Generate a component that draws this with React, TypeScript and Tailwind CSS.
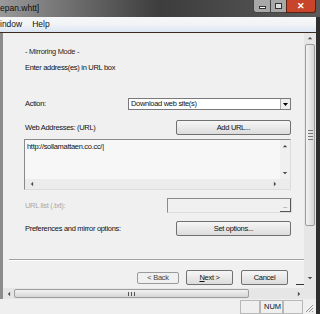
const font = { fontFamily: '"Liberation Sans", Arial, sans-serif' };

function Btn({ label, className = "" }: { label: React.ReactNode; className?: string }) {
  return (
    <div className={`flex items-center justify-center rounded-[2px] border border-[#707070] bg-[#e8e8e8] bg-gradient-to-b from-[#f6f6f6] to-[#dcdcdc] text-[7.5px] tracking-[-0.3px] text-[#111] ${className}`}>
      {label}
    </div>
  );
}

function Arrow({ dir, className = "" }: { dir: "up" | "down" | "left" | "right"; className?: string }) {
  const pts = {
    up: "1,4 4,1 7,4",
    down: "1,1 4,4 7,1",
    left: "4,1 1,4 4,7",
    right: "1,1 4,4 1,7",
  }[dir];
  const box = dir === "up" || dir === "down" ? "0 0 8 5" : "0 0 5 8";
  return (
    <svg viewBox={box} className={className} width={dir === "up" || dir === "down" ? 6 : 4} height={dir === "up" || dir === "down" ? 4 : 6}>
      <polygon points={pts} fill="#4a4a4a" />
    </svg>
  );
}

export default function App() {
  return (
    <div className="relative flex h-[314px] w-[320px] flex-col overflow-hidden bg-[#2b2b2b]" style={font}>
      {/* title bar */}
      <div className="flex h-[17px] w-[320px] shrink-0 items-start bg-[#444] bg-gradient-to-r from-[#9a9a9a] via-[#3d3d3d] to-[#5a5a5a]">
        <div className="mt-[3px] text-[8.5px] leading-[10px] text-[#101010]">epan.whtt]</div>
        <div className="ml-auto mr-[4px] flex h-[13px] w-[63px] shrink-0">
          <div className="flex w-[17px] shrink-0 items-center justify-center rounded-bl-[3px] border-b border-l border-[#444] bg-[#a8a8a8]">
            <div className="mt-[3px] h-[3px] w-[7px] border border-[#333] bg-white" />
          </div>
          <div className="flex w-[16px] shrink-0 items-center justify-center border-b border-l border-[#444] bg-[#a8a8a8]">
            <div className="h-[6px] w-[7px] border border-[#333] bg-[#ddd]" />
          </div>
          <div className="flex w-[30px] shrink-0 items-center justify-center rounded-br-[3px] border-b border-l border-r border-[#5a2010] bg-[#c8442a] text-[9px] font-bold leading-none text-white">
            ✕
          </div>
        </div>
      </div>

      <div className="flex flex-1">
        {/* window */}
        <div className="flex w-[316px] shrink-0 flex-col bg-[#f0f0f0]">
          {/* menu bar */}
          <div className="flex h-[16px] items-center gap-[10px] border-b border-[#3a2a20] bg-[#f1f3f6] bg-gradient-to-b from-[#f6f7f9] via-[#f1f3f6] to-[#dbe5f3] text-[8.5px] text-[#111]">
            <span>indow</span>
            <span>Help</span>
          </div>

          {/* client area */}
          <div className="flex h-[255px] border-l-[3px] border-l-[#8c8c8c]">
            <div className="flex w-[301px] flex-col bg-[#f0f0f0] text-[7.5px] tracking-[-0.3px] text-[#111]">
              <div className="ml-[22px] mt-[14px] leading-[9px] text-[#302418]">- Mirroring Mode -</div>
              <div className="ml-[22px] mt-[7px] leading-[9px]">Enter address(es) in URL box</div>

              <div className="mt-[26px] flex h-[12px] items-center">
                <span className="ml-[22px]">Action:</span>
                <div className="ml-auto mr-[13px] flex h-[12px] w-[163px] items-center border border-[#7a7a7a] bg-white pl-[2px]">
                  <span>Download web site(s)</span>
                  <div className="ml-auto flex h-full w-[10px] items-center justify-center border-l border-[#aaa] bg-[#eee]">
                    <svg width="5" height="3" viewBox="0 0 5 3"><polygon points="0,0 5,0 2.5,3" fill="#000" /></svg>
                  </div>
                </div>
              </div>

              <div className="mt-[10px] flex h-[15px] items-center">
                <span className="ml-[22px]">Web Addresses: (URL)</span>
                <Btn label="Add URL..." className="ml-auto mr-[13px] h-[15px] w-[115px]" />
              </div>

              <div className="ml-[21px] mt-[4px] flex h-[51px] w-[267px] flex-col border border-[#8a8a8a] border-b-[#dcdcdc] border-r-[#dcdcdc] bg-[#f7f7f7]">
                <div className="flex flex-1">
                  <div className="flex-1 pl-[2px] pt-[2px] leading-[9px]">http://sollamattaen.co.cc/|</div>
                  <div className="flex w-[10px] flex-col items-center justify-between bg-[#f0f0f0] py-[4px]">
                    <Arrow dir="up" />
                    <Arrow dir="down" />
                  </div>
                </div>
                <div className="flex h-[10px] items-center justify-between bg-[#ececec] pl-[5px] pr-[13px]">
                  <Arrow dir="left" />
                  <Arrow dir="right" />
                </div>
              </div>

              <div className="mt-[8px] flex h-[15px] items-center">
                <span className="ml-[22px] text-[#a8a8a8]">URL list (.txt):</span>
                <div className="ml-auto mr-[12px] flex h-[15px] w-[125px] border border-[#8a8a8a] border-b-[#dcdcdc] border-r-[#dcdcdc]">
                  <div className="flex-1" />
                  <div className="flex w-[11px] items-end justify-center border-b border-r border-[#555] pb-[2px] text-[6px] leading-none">
                    ...
                  </div>
                </div>
              </div>

              <div className="mt-[8px] flex h-[15px] items-center">
                <span className="ml-[22px]">Preferences and mirror options:</span>
                <Btn label="Set options..." className="ml-auto mr-[13px] h-[15px] w-[115px]" />
              </div>

              <div className="ml-[6px] mt-[23px] h-[2px] w-[296px] border-t border-b border-t-[#a0a0a0] border-b-white" />

              <div className="mt-[9px] flex items-center">
                <div className="ml-[134px] flex h-[12px] w-[42px] items-center justify-center rounded-[2px] border border-[#9a9a9a] text-[7.5px] text-[#444]">
                  &lt; Back
                </div>
                <Btn
                  label={
                    <>
                      <u>N</u>ext &gt;
                    </>
                  }
                  className="ml-[7px] h-[15px] w-[47px] border-[#3c3c3c]"
                />
                <Btn label="Cancel" className="ml-[8px] h-[15px] w-[47px]" />
                <div className="ml-[8px] mt-[13px] h-[1px] w-[8px] bg-[#333]" />
              </div>
            </div>

            {/* vertical scrollbar */}
            <div className="flex w-[12px] flex-col items-center bg-[#e6e6e6] pt-[3px]">
              <Arrow dir="up" />
              <div className="mt-[4px] flex h-[182px] w-[10px] flex-col items-center justify-center gap-[2px] rounded-[2px] border border-[#9c9c9c] bg-[#e4e4e4] bg-gradient-to-r from-[#f2f2f2] to-[#d8d8d8]">
                <div className="h-px w-[5px] bg-[#777]" />
                <div className="h-px w-[5px] bg-[#777]" />
                <div className="h-px w-[5px] bg-[#777]" />
                <div className="h-px w-[5px] bg-[#777]" />
              </div>
              <div className="mb-[8px] mt-auto">
                <Arrow dir="down" />
              </div>
            </div>
          </div>

          {/* horizontal scrollbar */}
          <div className="flex h-[11px] items-center border-l-[3px] border-l-[#8c8c8c] bg-[#e6e6e6]">
            <div className="ml-[4px]">
              <Arrow dir="left" />
            </div>
            <div className="ml-[3px] flex h-[9px] w-[235px] items-center justify-center gap-[2px] rounded-[2px] border border-[#9c9c9c] bg-[#e4e4e4] bg-gradient-to-b from-[#f2f2f2] to-[#d6d6d6]">
              <div className="h-[4px] w-px bg-[#555]" />
              <div className="h-[4px] w-px bg-[#555]" />
              <div className="h-[4px] w-px bg-[#555]" />
            </div>
            <div className="ml-[48px]">
              <Arrow dir="right" />
            </div>
          </div>

          {/* status bar */}
          <div className="flex h-[15px] items-stretch bg-[#efefef] pt-[1px]">
            <div className="ml-[240px] w-[20px] border border-[#b8b8b8]" />
            <div className="w-[23px] border border-[#b8b8b8] pl-[3px] text-[7.5px] leading-[12px] text-[#111]">NUM</div>
            <div className="w-[20px] border border-[#b8b8b8]" />
            <div className="ml-auto mr-[2px] flex items-end pb-[1px]">
              <svg width="10" height="10" viewBox="0 0 10 10">
                <path d="M9 2 L2 9 M9 5 L5 9 M9 8 L8 9" stroke="#999" strokeWidth="1" />
              </svg>
            </div>
          </div>
        </div>
        <div className="flex-1 bg-[#2e2e2e]" />
      </div>
    </div>
  );
}
